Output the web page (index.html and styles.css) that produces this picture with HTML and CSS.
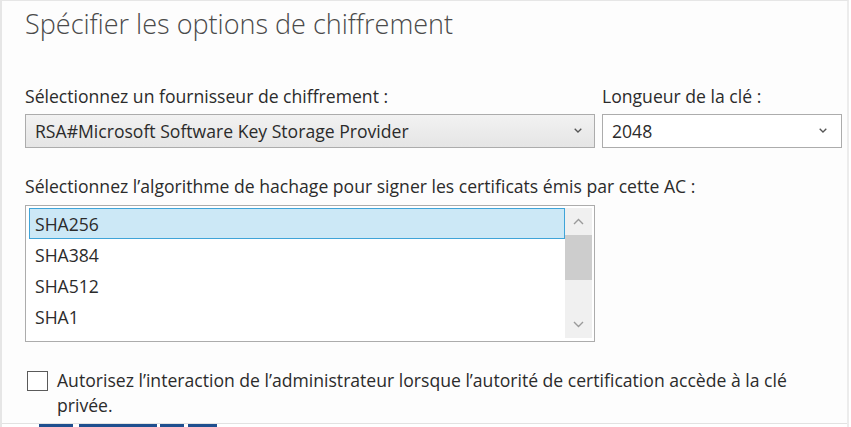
FILE: index.html
```html
<!DOCTYPE html>
<html lang="fr">
<head>
<meta charset="utf-8">
<title>Spécifier les options de chiffrement</title>
<link rel="stylesheet" href="styles.css">
</head>
<body>
<div class="frame">
  <div class="panel">
    <h1 class="title">Spécifier les options de chiffrement</h1>
    <div class="row">
      <div class="field provider">
        <label class="label">Sélectionnez un fournisseur de chiffrement :</label>
        <div class="select gray">
          <span>RSA#Microsoft Software Key Storage Provider</span>
          <svg class="chev" width="8" height="5" viewBox="0 0 8 5"><path d="M0.7 0.7 L4 4 L7.3 0.7" fill="none" stroke="#555" stroke-width="1.3"/></svg>
        </div>
      </div>
      <div class="field keylen">
        <label class="label">Longueur de la clé :</label>
        <div class="select white">
          <span>2048</span>
          <svg class="chev" width="8" height="5" viewBox="0 0 8 5"><path d="M0.7 0.7 L4 4 L7.3 0.7" fill="none" stroke="#555" stroke-width="1.3"/></svg>
        </div>
      </div>
    </div>
    <label class="label hash-label">Sélectionnez l’algorithme de hachage pour signer les certificats émis par cette AC :</label>
    <div class="listbox">
      <ul class="items">
        <li class="item selected">SHA256</li>
        <li class="item">SHA384</li>
        <li class="item">SHA512</li>
        <li class="item">SHA1</li>
      </ul>
      <div class="scrollbar">
        <div class="arrow-box"><svg width="11" height="7" viewBox="0 0 11 7"><path d="M1 6 L5.5 1.5 L10 6" fill="none" stroke="#9a9a9a" stroke-width="1.4"/></svg></div>
        <div class="track"><div class="thumb"></div></div>
        <div class="arrow-box"><svg width="11" height="7" viewBox="0 0 11 7"><path d="M1 1 L5.5 5.5 L10 1" fill="none" stroke="#9a9a9a" stroke-width="1.4"/></svg></div>
      </div>
    </div>
    <div class="check-row">
      <span class="checkbox"></span>
      <p class="check-text">Autorisez l’interaction de l’administrateur lorsque l’autorité de certification accède à la clé privée.</p>
    </div>
  </div>
  <div class="footer">
    <span class="btn b1"></span><span class="btn b2"></span><span class="btn b3"></span><span class="btn b4"></span>
  </div>
</div>
</body>
</html>
```
FILE: styles.css
```css
html, body {
  margin: 0;
  padding: 0;
  background: #ffffff;
}
body {
  width: 851px;
  height: 427px;
  overflow: hidden;
  font-family: "Open Sans", "Noto Sans", sans-serif;
  color: #2b2b2b;
}
.frame {
  width: 849px;
  height: 427px;
  box-sizing: border-box;
  border-left: 2px solid #e6e6e6;
  border-top: 1px solid #e6e6e6;
  border-right: 2px solid #ececec;
  display: flex;
  flex-direction: column;
}
.panel {
  flex: 1;
  background: #fdfdfd;
  padding: 0 0 0 23px;
  border-bottom: 1px solid #e2e2e2;
}
.title {
  margin: 5px 0 0 0;
  font-weight: 300;
  font-size: 27px;
  line-height: 36px;
  color: #4a4a4a;
}
.label {
  display: block;
  font-size: 17.6px;
  line-height: 24px;
  color: #2b2b2b;
  white-space: nowrap;
}
.row {
  display: flex;
  gap: 7px;
  margin-top: 42px;
}
.field .label {
  margin-bottom: 6px;
}
.provider { width: 570px; }
.keylen { width: 240px; }
.select {
  height: 34px;
  box-sizing: border-box;
  border: 1px solid #acacac;
  display: flex;
  align-items: center;
  justify-content: space-between;
  padding: 0 12px 0 9px;
  font-size: 17.6px;
  color: #2b2b2b;
}
.select.gray {
  background: linear-gradient(#f2f2f2, #e5e5e5);
}
.select.white {
  background: #fff;
  padding-right: 14px;
}
.chev {
  margin-top: -2px;
}
.hash-label {
  margin-top: 26px;
}
.listbox {
  margin-top: 7px;
  width: 570px;
  height: 137px;
  box-sizing: border-box;
  border: 1px solid #acacac;
  background: #fff;
  display: flex;
  padding: 2px 2px 3px 3px;
}
.items {
  list-style: none;
  margin: 0;
  padding: 0;
  flex: 1;
}
.item {
  height: 31px;
  box-sizing: border-box;
  display: flex;
  align-items: center;
  padding-left: 5px;
  font-size: 17.6px;
  color: #2b2b2b;
  border: 1px solid transparent;
}
.item.selected {
  background: #cce8f6;
  border-color: #3fa4d8;
}
.scrollbar {
  width: 27px;
  background: #f0f0f0;
  display: flex;
  flex-direction: column;
}
.arrow-box {
  height: 27px;
  display: flex;
  align-items: center;
  justify-content: center;
}
.track {
  flex: 1;
}
.thumb {
  height: 45px;
  background: #cdcdcd;
}
.check-row {
  display: flex;
  align-items: flex-start;
  gap: 9px;
  margin-top: 29px;
  margin-left: 2px;
}
.checkbox {
  width: 21px;
  height: 20px;
  box-sizing: border-box;
  border: 1px solid #5a5a5a;
  background: #fff;
  flex: none;
}
.check-text {
  margin: -3px 0 0 0;
  width: 770px;
  font-size: 17.6px;
  line-height: 25px;
  color: #2b2b2b;
}
.footer {
  height: 3px;
  display: flex;
  padding-left: 37px;
  background: #fff;
}
.btn {
  height: 3px;
  background: #1f4f8f;
}
.b1 { width: 34px; }
.b2 { width: 78px; margin-left: 6px; }
.b3 { width: 24px; margin-left: 3px; }
.b4 { width: 29px; margin-left: 4px; }
```
